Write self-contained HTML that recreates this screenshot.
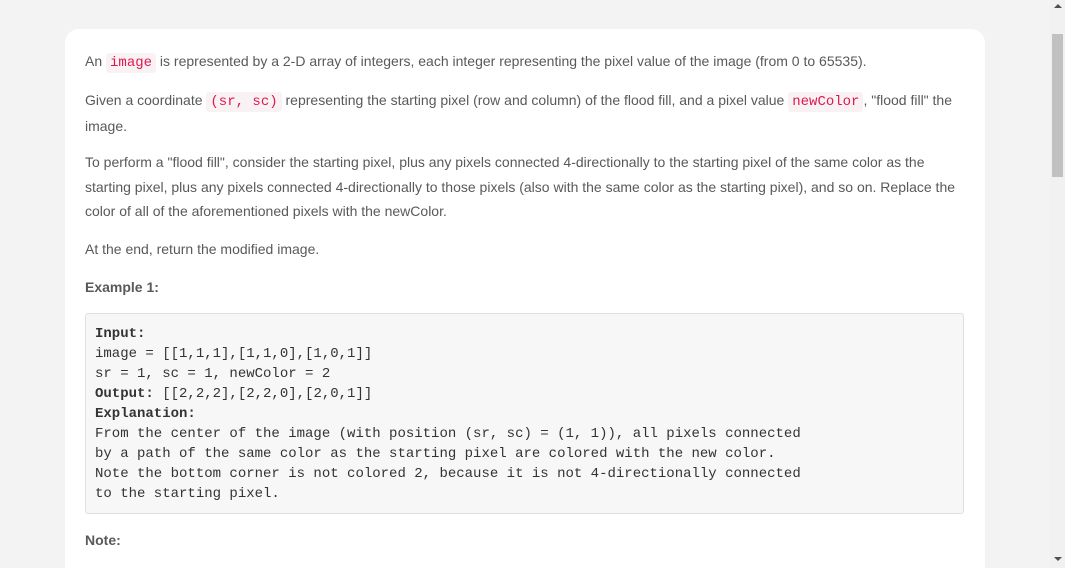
<!DOCTYPE html>
<html><head><style>
html,body{margin:0;padding:0;width:1065px;height:568px;overflow:hidden;}
body{background:#f3f3f3;position:relative;font-family:"Liberation Sans",sans-serif;}
.card{position:absolute;left:65px;top:29px;width:920px;height:539px;background:#fff;border-radius:14px 14px 0 0;overflow:hidden;}
.c{position:absolute;left:20px;width:880px;font-size:14px;color:#595959;line-height:24.5px;}
p{margin:0;}
code{font-family:"Liberation Mono",monospace;font-size:14px;color:#e0174f;background:#f9f2f4;border-radius:3px;padding:2px 4px;}
pre{position:absolute;left:20px;top:284px;width:858px;height:180px;margin:0;background:#f7f7f7;border:1px solid #e0e0e0;border-radius:3px;padding:10px 10px 9px 9px;font-family:"Liberation Mono",monospace;font-size:14px;line-height:20px;color:#333;}
b{font-weight:bold;}
.sb{position:absolute;right:0;top:0;width:15px;height:568px;background:#f1f1f1;}
.th{position:absolute;left:2px;top:34px;width:11px;height:143px;background:#c1c1c1;}
</style></head><body>
<div class="card">
<p class="c" style="top:20px">An <code>image</code> is represented by a 2-D array of integers, each integer representing the pixel value of the image (from 0 to 65535).</p>
<p class="c" style="top:59px;line-height:24px">Given a coordinate <code>(sr, sc)</code> representing the starting pixel (row and column) of the flood fill, and a pixel value <code>newColor</code>, "flood fill" the image.</p>
<p class="c" style="top:121px">To perform a "flood fill", consider the starting pixel, plus any pixels connected 4-directionally to the starting pixel of the same color as the starting pixel, plus any pixels connected 4-directionally to those pixels (also with the same color as the starting pixel), and so on. Replace the color of all of the aforementioned pixels with the newColor.</p>
<p class="c" style="top:208px">At the end, return the modified image.</p>
<p class="c" style="top:246px"><b>Example 1:</b></p>
<pre><b>Input:</b>
image = [[1,1,1],[1,1,0],[1,0,1]]
sr = 1, sc = 1, newColor = 2
<b>Output:</b> [[2,2,2],[2,2,0],[2,0,1]]
<b>Explanation:</b>
From the center of the image (with position (sr, sc) = (1, 1)), all pixels connected
by a path of the same color as the starting pixel are colored with the new color.
Note the bottom corner is not colored 2, because it is not 4-directionally connected
to the starting pixel.</pre>
<p class="c" style="top:499px"><b>Note:</b></p>
</div>
<div class="sb"><div class="th"></div>
<div style="position:absolute;left:4px;top:4px;width:0;height:0;border-left:4px solid transparent;border-right:4px solid transparent;border-bottom:4px solid #505050"></div>
<div style="position:absolute;left:4px;top:557px;width:0;height:0;border-left:4px solid transparent;border-right:4px solid transparent;border-top:4px solid #505050"></div>
</div>
</body></html>
